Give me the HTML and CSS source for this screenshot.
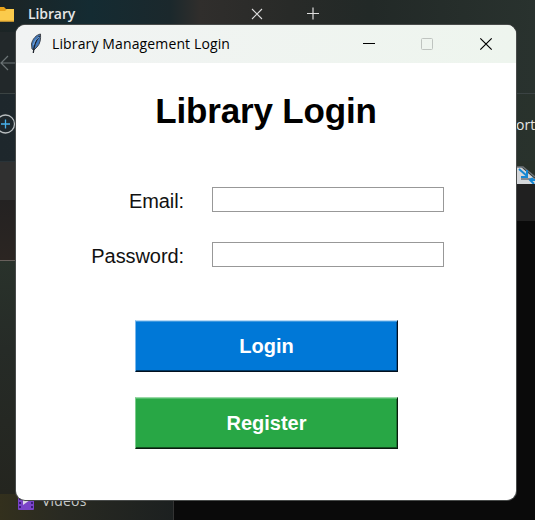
FILE: index.html
```html
<!DOCTYPE html>
<html lang="en">
<head>
<meta charset="utf-8">
<title>Library Management Login</title>
<link rel="stylesheet" href="styles.css">
</head>
<body>
<div class="explorer">
  <div class="tabs">
    <svg class="folder" width="15" height="16" viewBox="0 0 15 16"><path d="M0 1h4l2 2h8v4H0z" fill="#e9a21b"/><path d="M0 5h5l2-2h7v12.500H0z" fill="#fbcb4c"/><path d="M0 14.500h14v1H0z" fill="#e5a52c"/></svg>
    <span class="tab-name">Library</span>
    <svg class="tab-close" width="12" height="12" viewBox="0 0 12 12"><path d="M1 1l10 10M11 1L1 11" stroke="#ddd" stroke-width="1.100"/></svg>
    <svg class="tab-add" width="12" height="13" viewBox="0 0 12 13"><path d="M0 6.500h12M6 .5v12" stroke="#ddd" stroke-width="1.200"/></svg>
  </div>
  <div class="nav">
    <svg width="16" height="16" viewBox="0 0 16 16"><path d="M16 8H1M8 1L1 8l7 7" fill="none" stroke="#6c7476" stroke-width="1.200"/></svg>
  </div>
  <div class="tools">
    <svg width="16" height="20" viewBox="0 0 16 20"><circle cx="5.500" cy="10" r="9" fill="none" stroke="#b8bdbf" stroke-width="1.300"/><path d="M1 10h9M5.500 5.500v9" stroke="#48b0ea" stroke-width="1.300"/></svg>
    <span class="sort">ort</span>
  </div>
  <div class="heads">
    <div class="head-left"></div>
    <div class="head-right">
      <svg width="19" height="18" viewBox="0 0 19 18"><path d="M0 1h5l14 12v5H0z" fill="#d5d7da"/><path d="M1 1h6l12 10M5 13h14" fill="none" stroke="#6d7379" stroke-width="1.500"/><path d="M3 3l8 7M11 4v7H5" fill="none" stroke="#1688d4" stroke-width="2"/><path d="M19 14h-5m3-2l-3 2 4 4" fill="none" stroke="#1688d4" stroke-width="2"/></svg>
    </div>
  </div>
  <div class="body">
    <div class="side">
      <svg width="16" height="17" viewBox="0 0 16 17"><rect width="16" height="17" rx="1" fill="#7a43c8"/><path d="M1 5h2v2H1zM1 9h2v2H1zM1 13h2v2H1zM13 5h2v2h-2zM13 9h2v2h-2zM13 13h2v2h-2z" fill="#3c1c7c"/><path d="M5 3l7 4-7 5z" fill="#ddd5e8"/></svg>
      <span>Videos</span>
    </div>
    <div class="files"></div>
  </div>
</div>
<main class="window">
  <header class="titlebar">
    <svg class="feather" width="14" height="22" viewBox="0 0 14 22"><path d="M11.500 1C7 2 3.500 6 2.500 11l.5 5 2 1 3-3c3-3 4-8 3.500-13z" fill="#3f78bd" stroke="#42464c"/><path d="M10.500 3C7 7 5 12 4.300 20" fill="none" stroke="#20252d" stroke-width="1.300"/><path d="M10 4c-3 2-4.500 4-5.500 8" fill="none" stroke="#82b0e2"/></svg>
    <span class="caption">Library Management Login</span>
    <svg class="controls" width="132" height="16" viewBox="0 0 132 16"><path d="M0 7.500h12" stroke="#000"/><rect x="58.500" y="2.500" width="11" height="11" rx="1" fill="none" stroke="#bfc4c0"/><path d="M117.300 2.300l11.400 11.400M128.700 2.300L117.300 13.700" stroke="#000" stroke-width="1.200"/></svg>
  </header>
  <h1>Library Login</h1>
  <form class="form">
    <label for="email">Email:</label><input id="email" type="text">
    <label for="password">Password:</label><input id="password" type="password">
  </form>
  <div class="actions">
    <button class="login" type="button">Login</button>
    <button class="register" type="button">Register</button>
  </div>
</main>
</body>
</html>
```

FILE: styles.css
```css
* { box-sizing: border-box; }
body { margin: 0; width: 535px; height: 520px; overflow: hidden; position: relative; background: #0a0a0a; font-family: "Open Sans", "Noto Sans", sans-serif; }
svg { display: block; flex: none; }

.explorer { height: 520px; display: flex; flex-direction: column; color: #e6e6e6; }
.tabs { height: 32px; display: flex; align-items: center; padding-bottom: 5px; background: linear-gradient(90deg, #1c2425 0, #142b32 90px, #1b282c 170px, #302e2c 200px, #282a28 290px, #222927 370px, #29322e 535px); }
.tab-name { width: 223px; margin-left: 13px; font-size: 14px; font-weight: 600; line-height: 20px; letter-spacing: -.1px; }
.tab-add { margin-left: 44px; }
.nav { height: 62px; padding-top: 23px; border-bottom: 1px solid #3b4343; background: linear-gradient(90deg, #22282a 0, #22282a 50%, #29322e 100%); }
.tools { height: 67px; display: flex; align-items: center; justify-content: space-between; padding-bottom: 7px; background: linear-gradient(90deg, #1e272c 0, #222b2f 50%, #29322c 100%); }
.sort { width: 19px; font-size: 14px; line-height: 20px; padding-top: 2px; }
.heads { height: 60px; display: flex; justify-content: space-between; }
.head-left { width: 16px; height: 39px; background: #303030; border-top: 1px solid #293338; }
.head-right { width: 19px; height: 60px; padding-top: 5px; background: linear-gradient(#29312a 0, #29312a 23px, #202020 23px); }
.body { flex: 1; display: flex; margin-top: -21px; }
.side { width: 174px; border-right: 1px solid #333; display: flex; align-items: flex-end; padding: 0 0 10px 18px; gap: 8px; font-size: 14px; line-height: 20px; color: #c6c8c8; background: linear-gradient(90deg, #33301d 0, #292a22 60px, #1c2020 174px) 0 294px no-repeat, linear-gradient(#242222 0, #2b2522 60px, #68605c 60px, #68605c 61px, #29322b 61px, #262b27 150px, #24251f 294px); }
.side span { margin-bottom: -1px; letter-spacing: .2px; }
.files { flex: 1; margin-top: 21px; background: #0a0a0a; }

.window { position: absolute; left: 16px; top: 25px; width: 500px; height: 475px; border-radius: 9px; overflow: hidden; background: #fff; box-shadow: 0 0 0 1px #484b4a; color: #000; }
.titlebar { height: 38px; display: flex; align-items: center; padding: 0 21px 0 13px; background: linear-gradient(90deg, #f1f3f3, #eef5ee); }
.feather { margin-top: -1px; }
.caption { margin-left: 9px; font-size: 14px; line-height: 20px; letter-spacing: .13px; }
.controls { margin-left: auto; }
h1 { margin: 27px 0 0; text-align: center; font: bold 35px/42px "Liberation Sans", Arial, sans-serif; letter-spacing: -.15px; }
.form { margin: 55px 72px 0 60px; display: grid; grid-template-columns: 108px 232px; grid-template-rows: 25px 25px; row-gap: 30px; column-gap: 28px; font: 20px/28px "Liberation Sans", Arial, sans-serif; }
.form label { text-align: right; color: #111; letter-spacing: -.08px; }
.form input { width: 232px; height: 25px; border: 1px solid #989898; background: #fff; outline: 0; padding: 2px; }
.actions { width: 263px; margin: 53px 0 0 119px; display: grid; grid-template-rows: 52px 52px; gap: 25px; }
button { border: 1px solid; padding: 0; color: #fff; font: bold 20px/24px "Liberation Sans", Arial, sans-serif; }
.login { background: #0078d7; border-color: #b8d9f4 #02101e #02101e #7ab8ec; box-shadow: inset 0 1px #3c98e0, inset 0 -1px #003a69, inset -1px 0 #00569c; }
.register { background: #28a745; border-color: #9ad9a7 #0a1c0e #0a1c0e #7ccb8d; box-shadow: inset 0 1px #53bd6b, inset 0 -1px #145222, inset -1px 0 #1b7530; }
```
